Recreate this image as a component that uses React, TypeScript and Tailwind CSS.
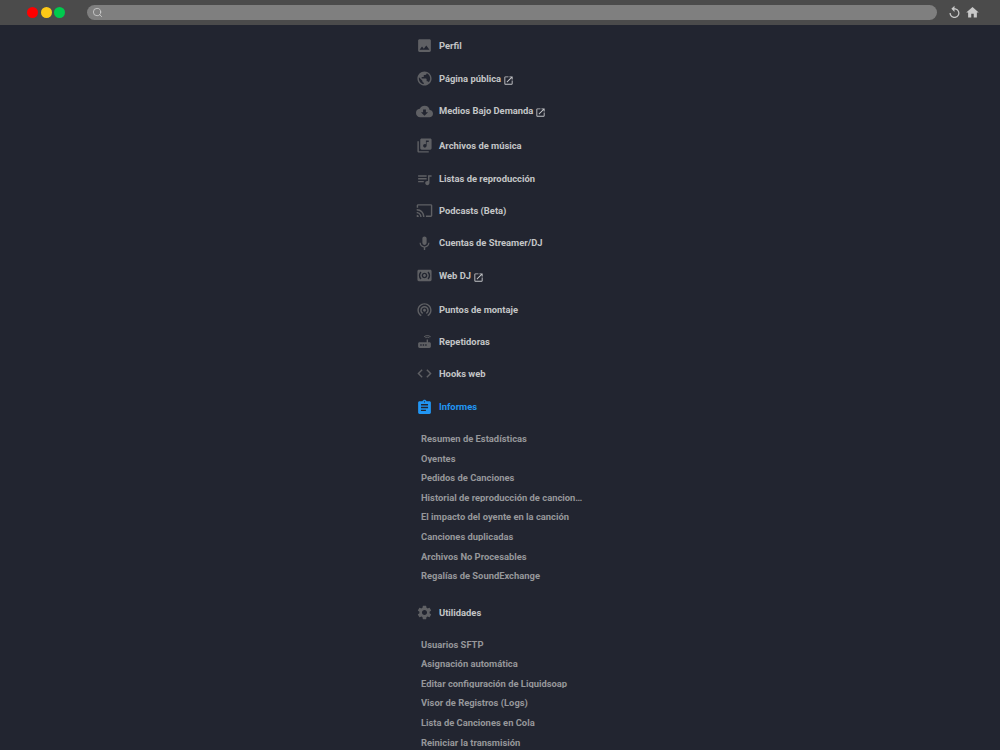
import React from "react";
import { MdImage, MdPublic, MdCloudDownload, MdLibraryMusic, MdQueueMusic, MdCast, MdMic, MdSurroundSound, MdWifiTethering, MdRouter, MdCode, MdAssignment, MdSettings, MdOpenInNew, MdReplay, MdHome } from "react-icons/md";
import { Search } from "lucide-react";

type Row = { label: string; Icon: React.ComponentType<{ className?: string }>; ext?: boolean; h: string };

const top: Row[] = [
  { label: "Perfil", Icon: MdImage, h: "h-[33px]" },
  { label: "Página pública", Icon: MdPublic, ext: true, h: "h-[33px]" },
  { label: "Medios Bajo Demanda", Icon: MdCloudDownload, ext: true, h: "h-[32px]" },
  { label: "Archivos de música", Icon: MdLibraryMusic, h: "h-[37px]" },
  { label: "Listas de reproducción", Icon: MdQueueMusic, h: "h-[30px]" },
  { label: "Podcasts (Beta)", Icon: MdCast, h: "h-[33px]" },
  { label: "Cuentas de Streamer/DJ", Icon: MdMic, h: "h-[32px]" },
  { label: "Web DJ", Icon: MdSurroundSound, ext: true, h: "h-[33px]" },
  { label: "Puntos de montaje", Icon: MdWifiTethering, h: "h-[35px]" },
  { label: "Repetidoras", Icon: MdRouter, h: "h-[29px]" },
  { label: "Hooks web", Icon: MdCode, h: "h-[35px]" },
];

const informes = [
  "Resumen de Estadísticas",
  "Oyentes",
  "Pedidos de Canciones",
  "Historial de reproducción de canciones",
  "El impacto del oyente en la canción",
  "Canciones duplicadas",
  "Archivos No Procesables",
  "Regalías de SoundExchange",
];

const utilidades = [
  "Usuarios SFTP",
  "Asignación automática",
  "Editar configuración de Liquidsoap",
  "Visor de Registros (Logs)",
  "Lista de Canciones en Cola",
  "Reiniciar la transmisión",
];

function NavRow({ label, Icon, ext, h, active }: Row & { active?: boolean }) {
  return (
    <div className={`flex items-center ${h}`}>
      <div className="w-[32px] flex justify-start pl-[9px]">
        <Icon className={`w-[17px] h-[17px] shrink-0 ${active ? "text-[#2196f3]" : "text-[#5f6064]"}`} />
      </div>
      <span className={`text-[9.4px] font-bold leading-none ${active ? "text-[#2196f3]" : "text-[#c4c5c7]"}`}>{label}</span>
      {ext && <MdOpenInNew className="w-[11px] h-[11px] ml-[2px] mt-[3px] text-[#c4c5c7]" />}
    </div>
  );
}

function SubList({ items }: { items: string[] }) {
  return (
    <div className="flex flex-col pl-[14px]">
      {items.map((t) => (
        <div key={t} className="h-[19.6px] flex items-center">
          <span className="block w-[162px] truncate text-[9.4px] font-bold leading-none text-[#96979a]">{t}</span>
        </div>
      ))}
    </div>
  );
}

export default function App() {
  return (
    <div className="h-[750px] w-[1000px] overflow-hidden bg-[#222530] font-['Roboto',sans-serif]">
      <header className="h-[25px] bg-[#4b4b4b] flex items-center pl-[27px] pr-[20px]">
        <div className="flex gap-[2.5px]">
          <span className="w-[11px] h-[11px] rounded-full bg-[#fe0000]" />
          <span className="w-[11px] h-[11px] rounded-full bg-[#fec917]" />
          <span className="w-[11px] h-[11px] rounded-full bg-[#00ca4e]" />
        </div>
        <div className="ml-[22px] w-[851px] h-[15px] rounded-full bg-[#7f7f7f] flex items-center pl-[5px]">
          <Search className="w-[11px] h-[11px] text-[#d8d8d8]" strokeWidth={1.6} />
        </div>
        <MdReplay className="ml-[10px] w-[15px] h-[15px] text-[#c8c8c8]" />
        <MdHome className="ml-[3px] w-[15px] h-[15px] text-[#c8c8c8]" />
      </header>
      <nav className="w-[200px] ml-[407px] pt-[4px]">
        {top.map((r) => (
          <NavRow key={r.label} {...r} />
        ))}
        <NavRow label="Informes" Icon={MdAssignment} h="h-[32px]" active />
        <div className="pt-[5.9px] pb-[11.1px]">
          <SubList items={informes} />
        </div>
        <NavRow label="Utilidades" Icon={MdSettings} h="h-[32px]" />
        <div className="pt-[5.8px]">
          <SubList items={utilidades} />
        </div>
      </nav>
    </div>
  );
}
